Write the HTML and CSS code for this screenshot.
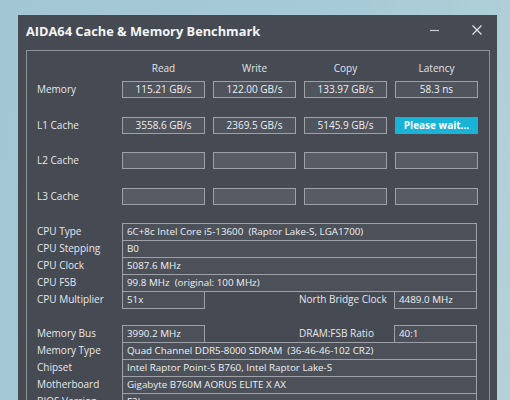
FILE: index.html
```html
<!DOCTYPE html>
<html>
<head>
<meta charset="utf-8">
<link rel="stylesheet" href="styles.css">
</head>
<body>
<div class="window">
  <div class="titlebar">
    <span class="title">AIDA64 Cache &amp; Memory Benchmark</span>
    <span class="controls">
      <svg class="min" width="12" height="12" viewBox="0 0 12 12"><line x1="1" y1="6.5" x2="10" y2="6.5" stroke="#c9ccd2" stroke-width="1.2"/></svg>
      <svg class="close" width="12" height="12" viewBox="0 0 12 12"><path d="M1.5 1.5 L10.5 10.5 M10.5 1.5 L1.5 10.5" stroke="#e4e6ea" stroke-width="1.2" fill="none"/></svg>
    </span>
  </div>
  <div class="group">
    <div class="bench-head">
      <div></div>
      <div class="hdr">Read</div>
      <div class="hdr">Write</div>
      <div class="hdr">Copy</div>
      <div class="hdr">Latency</div>
    </div>
    <div class="bench">
      <div class="lbl">Memory</div>
      <div class="val">115.21 GB/s</div>
      <div class="val">122.00 GB/s</div>
      <div class="val">133.97 GB/s</div>
      <div class="val">58.3 ns</div>

      <div class="lbl">L1 Cache</div>
      <div class="val">3558.6 GB/s</div>
      <div class="val">2369.5 GB/s</div>
      <div class="val">5145.9 GB/s</div>
      <div class="val wait">Please wait...</div>

      <div class="lbl">L2 Cache</div>
      <div class="val empty"></div>
      <div class="val empty"></div>
      <div class="val empty"></div>
      <div class="val empty"></div>

      <div class="lbl">L3 Cache</div>
      <div class="val empty"></div>
      <div class="val empty"></div>
      <div class="val empty"></div>
      <div class="val empty"></div>
    </div>

    <div class="info">
      <div class="row"><span class="ilbl">CPU Type</span><span class="box full">6C+8c Intel Core i5-13600  (Raptor Lake-S, LGA1700)</span></div>
      <div class="row"><span class="ilbl">CPU Stepping</span><span class="box full">B0</span></div>
      <div class="row"><span class="ilbl">CPU Clock</span><span class="box full">5087.6 MHz</span></div>
      <div class="row"><span class="ilbl">CPU FSB</span><span class="box full">99.8 MHz  (original: 100 MHz)</span></div>
      <div class="row"><span class="ilbl">CPU Multiplier</span><span class="box short">51x</span><span class="mlbl">North Bridge Clock</span><span class="box short">4489.0 MHz</span></div>
    </div>

    <div class="info">
      <div class="row"><span class="ilbl">Memory Bus</span><span class="box short">3990.2 MHz</span><span class="mlbl">DRAM:FSB Ratio</span><span class="box short">40:1</span></div>
      <div class="row"><span class="ilbl">Memory Type</span><span class="box full">Quad Channel DDR5-8000 SDRAM  (36-46-46-102 CR2)</span></div>
      <div class="row"><span class="ilbl">Chipset</span><span class="box full">Intel Raptor Point-S B760, Intel Raptor Lake-S</span></div>
      <div class="row"><span class="ilbl">Motherboard</span><span class="box full">Gigabyte B760M AORUS ELITE X AX</span></div>
      <div class="row"><span class="ilbl">BIOS Version</span><span class="box full">F2b</span></div>
    </div>
  </div>
</div>
</body>
</html>
```
FILE: styles.css
```css
html, body {
  margin: 0;
  padding: 0;
}
body {
  width: 510px;
  height: 400px;
  overflow: hidden;
  background: linear-gradient(100deg, #a2c7d3 0%, #a6cad6 60%, #b4d1d9 100%);
  font-family: "Open Sans", "Noto Sans", sans-serif;
  color: #e6e8ec;
}
.window {
  margin: 15px 0 0 18px;
  width: 479px;
  height: 385px;
  overflow: hidden;
  background: #464a53;
  box-sizing: border-box;
}
.titlebar {
  height: 35px;
  display: flex;
  align-items: center;
  justify-content: space-between;
  padding: 0 0 0 8px;
}
.title {
  font-family: "Open Sans", sans-serif;
  font-weight: 700;
  font-size: 12.8px;
  color: #f4f5f7;
  margin-top: -4px;
}
.controls {
  display: flex;
  align-items: center;
  margin-top: -6px;
}
.min {
  margin-right: 30px;
}
.close {
  margin-right: 14px;
}
.group {
  margin-left: 8px;
  width: 464px;
  height: 400px;
  border: 1px solid #8d9097;
  box-sizing: border-box;
  padding: 7px 0 0 10px;
}
.bench-head,
.bench {
  display: grid;
  grid-template-columns: 77px 83px 83px 83px 83px;
  column-gap: 8px;
}
.bench-head {
  height: 20px;
  margin-bottom: 3px;
}
.bench {
  grid-template-rows: repeat(4, 17px);
  row-gap: 18.5px;
}
.hdr {
  font-size: 10px;
  text-align: center;
  line-height: 20px;
  color: #e2e4e8;
}
.lbl {
  font-size: 10px;
  line-height: 17px;
  color: #e6e8ec;
}
.val {
  box-sizing: border-box;
  height: 17px;
  border: 1px solid #9ea1a7;
  background: #50545d;
  font-size: 10px;
  line-height: 15px;
  text-align: center;
  color: #eef0f3;
}
.val.empty {
  background: #575b64;
}
.val.wait {
  background: #19b3d8;
  border-color: #19b3d8;
  font-weight: 700;
  color: #ffffff;
}
.info {
  margin-top: 18px;
  display: flex;
  flex-direction: column;
}
.info + .info {
  margin-top: 17px;
}
.row {
  display: flex;
  height: 17px;
}
.ilbl {
  width: 85px;
  flex: none;
  font-size: 10px;
  line-height: 17px;
  color: #e6e8ec;
}
.box {
  box-sizing: border-box;
  height: 18px;
  border: 1px solid #9ea1a7;
  background: #4c5059;
  font-size: 9.8px;
  line-height: 16px;
  padding-left: 4px;
  white-space: pre;
  color: #eef0f3;
  position: relative;
}
.box.full {
  width: 355px;
}
.box.short {
  width: 83px;
}
.mlbl {
  width: 189px;
  box-sizing: border-box;
  padding-left: 94px;
  font-size: 10px;
  line-height: 17px;
  color: #e6e8ec;
}
```
